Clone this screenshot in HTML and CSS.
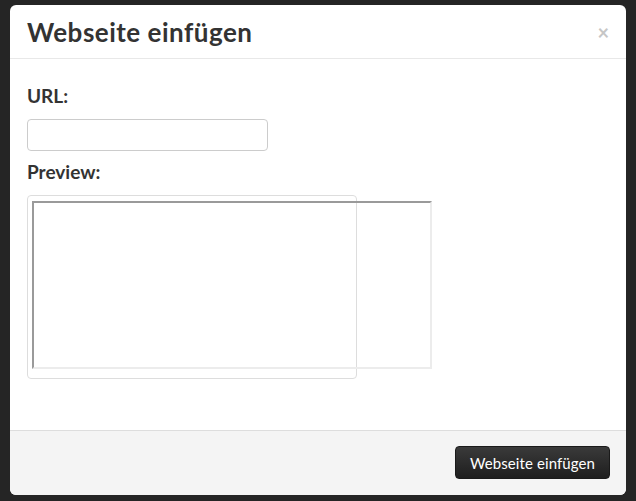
FILE: index.html
```html
<!DOCTYPE html>
<html lang="de">
<head>
<meta charset="utf-8">
<title>Webseite einfügen</title>
<link rel="stylesheet" href="styles.css">
</head>
<body>
<div class="modal">
  <div class="modal-header">
    <h3 class="modal-title">Webseite einfügen</h3>
    <span class="close">×</span>
  </div>
  <div class="modal-body">
    <label class="field-label">URL:</label>
    <input class="url-input" type="text">
    <label class="field-label preview-label">Preview:</label>
    <div class="preview-box">
      <div class="preview-frame"></div>
    </div>
  </div>
  <div class="modal-footer">
    <button class="btn-insert">Webseite einfügen</button>
  </div>
</div>
</body>
</html>
```

FILE: styles.css
```css
html, body {
  margin: 0;
  padding: 0;
  background: #252525;
  height: 100%;
}
body {
  font-family: Lato, "Liberation Sans", sans-serif;
  color: #333;
  padding: 5px 10px 0 10px;
  box-sizing: border-box;
}
.modal {
  width: 616px;
  height: 490px;
  background: #fff;
  border-radius: 6px;
  display: flex;
  flex-direction: column;
  overflow: hidden;
}
.modal-header {
  display: flex;
  justify-content: space-between;
  align-items: flex-start;
  padding: 13px 16px 12px 17px;
  border-bottom: 1px solid #e8e8e8;
}
.modal-title {
  margin: 0;
  font-size: 26px;
  font-weight: 700;
  letter-spacing: 0.5px;
  line-height: 28px;
  color: #333;
}
.close {
  font-size: 20px;
  font-weight: 700;
  line-height: 20px;
  color: #c6c6c6;
  margin-top: 4px;
  margin-right: 1px;
}
.modal-body {
  flex: 1;
  padding: 25px 17px 0 17px;
  display: flex;
  flex-direction: column;
  align-items: flex-start;
}
.field-label {
  display: block;
  font-size: 19px;
  font-weight: 700;
  line-height: 24px;
  color: #333;
}
.url-input {
  margin: 11px 0 0 0;
  width: 241px;
  height: 32px;
  box-sizing: border-box;
  border: 1px solid #cccccc;
  border-radius: 4px;
  padding: 4px 6px;
  font-family: inherit;
  font-size: 14px;
  background: #fff;
}
.preview-label {
  margin-top: 9px;
}
.preview-box {
  margin-top: 11px;
  width: 330px;
  height: 184px;
  box-sizing: border-box;
  border: 1px solid #dddddd;
  border-radius: 4px;
  padding: 5px 0 0 4px;
}
.preview-frame {
  width: 400px;
  height: 168px;
  box-sizing: border-box;
  border-top: 2px solid #9a9a9a;
  border-left: 2px solid #9a9a9a;
  border-right: 2px solid #ececec;
  border-bottom: 2px solid #ececec;
}
.modal-footer {
  background: #f4f4f4;
  border-top: 1px solid #dddddd;
  padding: 15px 16px 16px 16px;
  display: flex;
  justify-content: flex-end;
}
.btn-insert {
  height: 33px;
  width: 155px;
  border: 1px solid #1a1a1a;
  border-radius: 4px;
  background: linear-gradient(#3a3a3a, #1e1e1e);
  color: #fff;
  font-family: Lato, "Liberation Sans", sans-serif;
  font-size: 15px;
  letter-spacing: 0.1px;
  padding: 0;
}
```
